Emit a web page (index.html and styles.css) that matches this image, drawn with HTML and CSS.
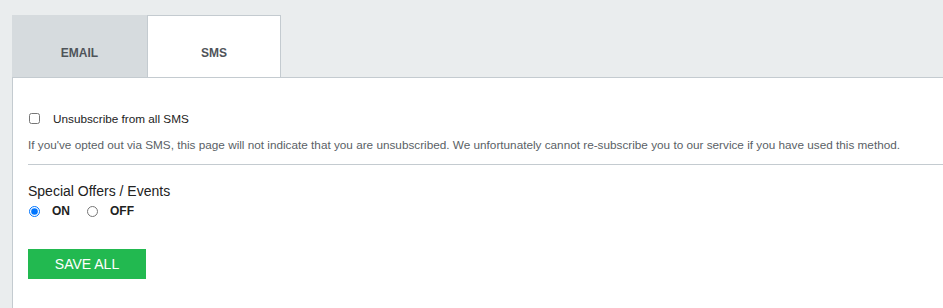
FILE: index.html
```html
<!DOCTYPE html>
<html lang="en">
<head>
<meta charset="UTF-8">
<title>Subscriptions</title>
<link rel="stylesheet" href="styles.css">
</head>
<body>
<div class="wrap">
<div class="tabs">
<div class="tab">EMAIL</div>
<div class="tab active">SMS</div>
</div>
<div class="panel">
<label class="unsub"><input type="checkbox"> <span>Unsubscribe from all SMS</span></label>
<p class="note">If you've opted out via SMS, this page will not indicate that you are unsubscribed. We unfortunately cannot re-subscribe you to our service if you have used this method.</p>
<hr>
<div class="group">
<div class="group-title">Special Offers / Events</div>
<div class="radios">
<label><input type="radio" name="offers" checked> <span>ON</span></label>
<label><input type="radio" name="offers"> <span>OFF</span></label>
</div>
</div>
<button type="button" class="save">SAVE ALL</button>
</div>
</div>
</body>
</html>
```
FILE: styles.css
```css
body {
    margin: 0;
    background: #eaedee;
    font-family: "Liberation Sans", Arial, sans-serif;
    color: #333;
}

.wrap {
    padding: 15px 0 0 12px;
}

.tabs {
    display: flex;
}

.tab {
    width: 135px;
    height: 62px;
    box-sizing: border-box;
    display: flex;
    align-items: center;
    justify-content: center;
    padding-top: 14px;
    background: #d6dbde;
    font-size: 12px;
    font-weight: bold;
    color: #4f545a;
}

.tab.active {
    width: 134px;
    background: #fff;
    border: 1px solid #c4cbd0;
    border-bottom: none;
    padding-top: 12px;
}

.panel {
    background: #fff;
    border-top: 1px solid #c4cbd0;
    border-left: 1px solid #c4cbd0;
    padding: 34px 0 40px 15px;
}

.unsub {
    display: flex;
    align-items: center;
    font-size: 11.75px;
    color: #222;
}

.unsub input {
    margin: 0 13px 0 1px;
    width: 11px;
    height: 11px;
}

.note {
    margin: 13px 0 0 0;
    font-size: 11.75px;
    color: #5a5f66;
}

hr {
    margin: 13px 0 0 0;
    border: none;
    border-top: 1px solid #c4cbd0;
}

.group {
    margin-top: 18px;
}

.group-title {
    font-size: 14px;
    color: #222;
}

.radios {
    display: flex;
    gap: 16px;
    margin-top: 5px;
}

.radios label {
    display: flex;
    align-items: center;
    font-size: 12px;
    font-weight: bold;
    color: #222;
}

.radios input {
    margin: 0 12px 0 1px;
    width: 11px;
    height: 11px;
}

.save {
    margin-top: 31px;
    width: 118px;
    height: 30px;
    background: #22b950;
    color: #fff;
    border: none;
    font-family: "Liberation Sans", Arial, sans-serif;
    font-size: 14px;
    cursor: pointer;
}
```
